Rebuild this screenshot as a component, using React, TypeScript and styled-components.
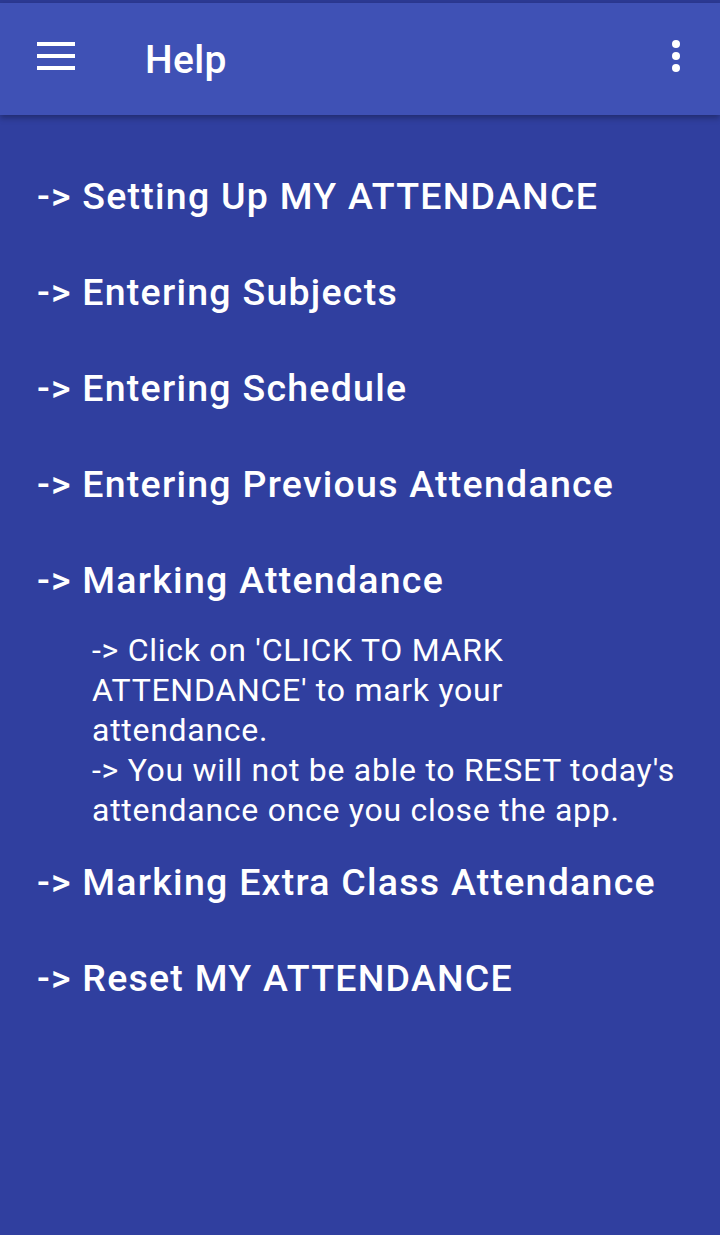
import React from "react";
import styled, { createGlobalStyle } from "styled-components";

const Global = createGlobalStyle`
  html, body { margin: 0; padding: 0; background: #303f9f; }
  body { font-family: Roboto, "Noto Sans", sans-serif; }
`;

const Screen = styled.div`
  width: 720px;
  height: 1235px;
  background: #303f9f;
  display: flex;
  flex-direction: column;
  overflow: hidden;
`;

const StatusStrip = styled.div`
  height: 3px;
  background: #2c3a94;
`;

const Toolbar = styled.header`
  height: 112px;
  background: #3f51b5;
  display: flex;
  align-items: center;
  padding: 0 40px 0 37px;
  box-shadow: 0 3px 6px rgba(0, 0, 0, 0.3);
  position: relative;
  z-index: 1;
`;

const MenuButton = styled.div`
  width: 38px;
  display: flex;
  flex-direction: column;
  gap: 8px;
  margin-top: -6px;
  span {
    display: block;
    height: 4px;
    background: #fff;
  }
`;

const Title = styled.h1`
  margin: 0 0 0 70px;
  flex: 1;
  color: #fff;
  font-size: 39px;
  font-weight: 500;
  letter-spacing: 0.3px;
  line-height: 1;
  margin-top: 2px;
`;

const Overflow = styled.div`
  display: flex;
  flex-direction: column;
  gap: 4px;
  margin-top: -6px;
  span {
    width: 8px;
    height: 8px;
    border-radius: 50%;
    background: #fff;
  }
`;

const Content = styled.main`
  display: flex;
  flex-direction: column;
  padding: 56px 10px 0 37px;
`;

const Heading = styled.h2`
  margin: 0;
  color: #fff;
  font-size: 37.5px;
  font-weight: 500;
  letter-spacing: 1.25px;
  height: 96px;
  line-height: 50px;
  white-space: nowrap;
`;

const Detail = styled.p`
  margin: -21px 0 0 55px;
  color: #fff;
  font-size: 32px;
  font-weight: 400;
  letter-spacing: 0.72px;
  line-height: 40px;
  height: 227px;
  white-space: nowrap;
`;

const headings = [
  "-> Setting Up MY ATTENDANCE",
  "-> Entering Subjects",
  "-> Entering Schedule",
  "-> Entering Previous Attendance",
  "-> Marking Attendance",
];

export default function App() {
  return (
    <>
      <Global />
      <Screen>
        <StatusStrip />
        <Toolbar>
          <MenuButton>
            <span />
            <span />
            <span />
          </MenuButton>
          <Title>Help</Title>
          <Overflow>
            <span />
            <span />
            <span />
          </Overflow>
        </Toolbar>
        <Content>
          {headings.map((h) => (
            <Heading key={h}>{h}</Heading>
          ))}
          <Detail>
            -&gt; Click on 'CLICK TO MARK
            <br />
            ATTENDANCE' to mark your
            <br />
            attendance.
            <br />
            -&gt; You will not be able to RESET today's
            <br />
            attendance once you close the app.
          </Detail>
          <Heading>-&gt; Marking Extra Class Attendance</Heading>
          <Heading>-&gt; Reset MY ATTENDANCE</Heading>
        </Content>
      </Screen>
    </>
  );
}
